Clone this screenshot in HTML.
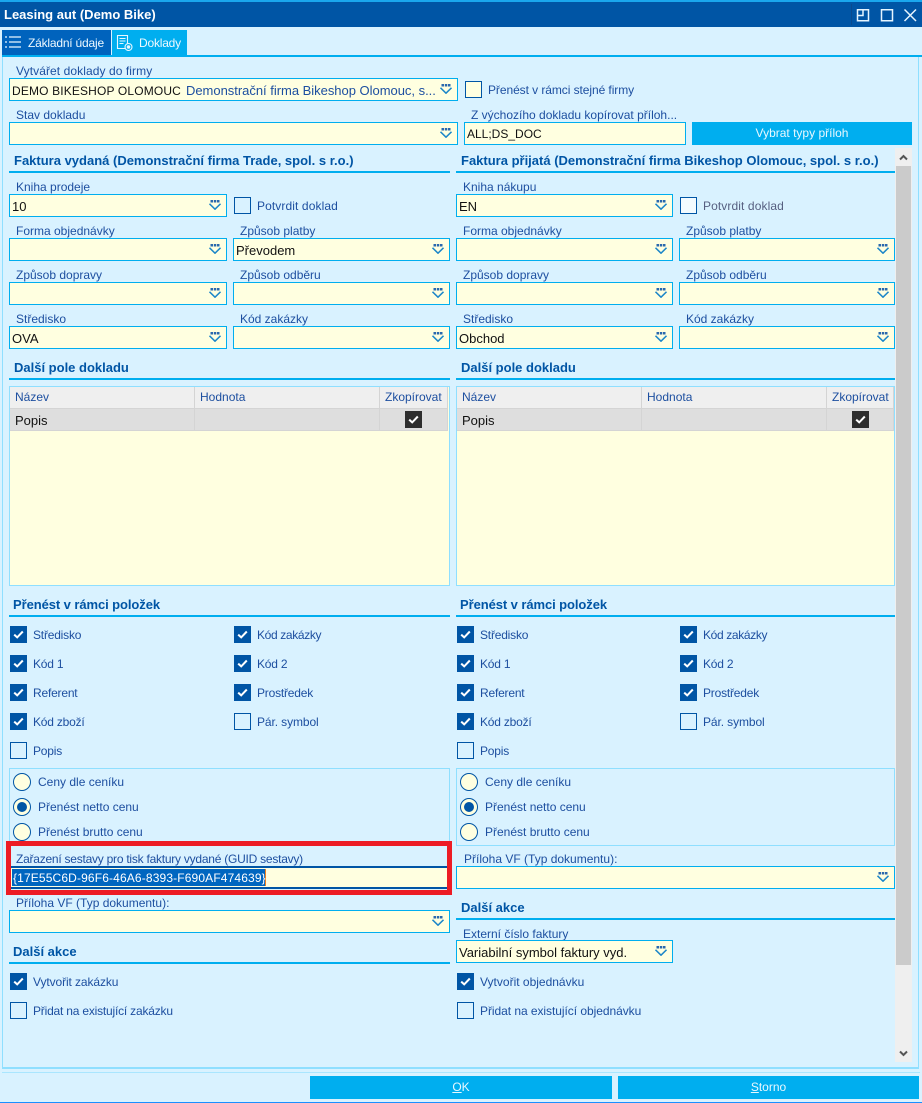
<!DOCTYPE html>
<html lang="cs"><head><meta charset="utf-8"><title>Leasing aut (Demo Bike)</title>
<style>
html,body{margin:0;padding:0}
body{width:922px;height:1103px;position:relative;overflow:hidden;background:#d9f2ff;font-family:"Liberation Sans",sans-serif;font-size:12px;color:#1d4fa0}
body div,body svg.a{position:absolute;box-sizing:border-box}
.t{white-space:nowrap;line-height:16px;height:16px}
.n{letter-spacing:-.2px}
.h{white-space:nowrap;font-weight:bold;font-size:13px;color:#0055a5;line-height:16px;height:16px}
.l{height:2px;background:#00aeef}
.i{height:23px;border:1px solid #00aeef;background:#ffffe0;color:#111;font-size:13px;line-height:23px;padding-left:2px;white-space:nowrap}
.i svg{position:absolute;right:5px;top:5px;width:12px;height:10px}
.c{width:17px;height:17px;border:1px solid #0055a5}
.c.on{background:#0055a5}
.c svg{position:absolute;left:2px;top:3px;width:11px;height:9px}
.r{width:18px;height:18px;border:1px solid #0055a5;border-radius:50%;background:#ffffe0}
.r.on:after{content:"";position:absolute;left:3px;top:3px;width:10px;height:10px;border-radius:50%;background:#0055a5}
.b{background:#00aeef;color:#e8f8ff;text-align:center;line-height:23px;height:23px}
.th{background:#efefef;height:22px;border-bottom:1px solid #d4d4d4;border-right:1px solid #d4d4d4;line-height:21px;padding-left:5px}
.td{background:#dedede;height:22px;border-bottom:1px solid #d4d4d4;border-right:1px solid #d4d4d4;line-height:23px;padding-left:5px;color:#111;font-size:13px}
.g{width:441px;height:200px;border:1px solid #8fdfff;background:#ffffe0}
</style></head><body>
<svg width="0" height="0" style="position:absolute"><defs>
<symbol id="dd" viewBox="0 0 12 10"><path d="M1.500 0h2.500v2.500H1.500zM4.800 0h2.500v2.500H4.800zM8 0h2.500v2.500H8z" fill="#2a68ad"/><path d="M.5 3.800L6 9.200l5.500-5.400" fill="none" stroke="#1c86c8" stroke-width="1.500"/></symbol>
<symbol id="ck" viewBox="0 0 11 9"><path d="M1.200 4.600L4.200 7.400 9.800 1.500" fill="none" stroke="#fff" stroke-width="2"/></symbol>
</defs></svg>

<div style="left:0;top:0;width:922px;height:2px;background:#1aa7ee"></div>
<div style="left:0;top:2px;width:922px;height:25px;background:#0055a5"></div>
<div class="t" style="left:4px;top:7px;color:#fff;font-weight:bold;font-size:13px">Leasing aut (Demo Bike)</div>
<div style="left:851px;top:4px;width:1px;height:21px;background:#0a4a8f"></div>
<svg class="a" style="left:850px;top:2px" width="72" height="25" viewBox="0 0 72 25" fill="none" stroke="#e6f5ff" stroke-width="1.500"><path d="M7.500 7.800h11v11h-11zM7.500 13.500h5.500V7.800"/><path d="M31.500 7.800h11v11h-11z"/><path d="M54.500 7.500l11.500 11.500M66 7.500L54.500 19"/></svg>

<div style="left:2px;top:30px;width:109px;height:25px;background:#0063bd"></div>
<div style="left:112px;top:30px;width:75px;height:25px;background:#00aeef"></div>
<svg class="a" style="left:4px;top:34px" width="18" height="16" viewBox="0 0 18 16" stroke="#e8f6ff" stroke-width="1.200"><path d="M1 3h2M5 3h12M1 8h2M5 8h12M1 13h2M5 13h12"/></svg>
<div class="t n" style="left:28px;top:35px;color:#eef9ff">Základní údaje</div>
<svg class="a" style="left:116px;top:34px" width="18" height="18" viewBox="0 0 18 18" fill="none" stroke="#e8f6ff" stroke-width="1.100"><path d="M1.500 1.500h10v13h-10zM3.500 4.500h6M3.500 7h6M3.500 9.500h4"/><circle cx="12.500" cy="13" r="3.500" fill="#00aeef"/><circle cx="12.500" cy="13" r="1.200" fill="#e8f6ff"/></svg>
<div class="t n" style="left:139px;top:35px;color:#eef9ff">Doklady</div>

<div style="left:2px;top:55px;width:920px;height:2px;background:#00aeef"></div>
<div style="left:2px;top:57px;width:917px;height:1012px;border:1px solid #8fdfff;border-top:0;border-width:0 1px 2px 1px"></div>
<div style="left:2px;top:1072px;width:918px;height:1px;background:#a9e6ff"></div>

<div class="t" style="left:16px;top:63px;letter-spacing:.08px">Vytvářet doklady do firmy</div>
<div class="i" style="left:9px;top:78px;width:449px"><span style="font-size:12px;letter-spacing:.15px">DEMO BIKESHOP OLOMOUC</span><span style="color:#1d4fa0;margin-left:5px;letter-spacing:-.02px">Demonstrační firma Bikeshop Olomouc, s...</span><svg><use href="#dd"/></svg></div>
<div class="c" style="left:465px;top:81px;background:#ffffe0"></div>
<div class="t" style="left:488px;top:82px;letter-spacing:-.07px">Přenést v rámci stejné firmy</div>

<div class="t" style="left:16px;top:107px">Stav dokladu</div>
<div class="i" style="left:9px;top:122px;width:449px"><svg><use href="#dd"/></svg></div>
<div class="t" style="left:471px;top:107px">Z výchozího dokladu kopírovat příloh...</div>
<div class="i" style="left:464px;top:122px;width:222px;font-size:12px">ALL;DS_DOC</div>
<div class="b" style="left:692px;top:122px;width:220px">Vybrat typy příloh</div>

<div class="h" style="left:14px;top:153px">Faktura vydaná (Demonstrační firma Trade, spol. s r.o.)</div>
<div class="l" style="left:9px;top:171px;width:441px"></div>
<div class="h" style="left:461px;top:153px">Faktura přijatá (Demonstrační firma Bikeshop Olomouc, spol. s r.o.)</div>
<div class="l" style="left:456px;top:171px;width:439px"></div>

<div style="left:895px;top:148px;width:17px;height:914px;background:#efefef"></div>
<div style="left:896px;top:166px;width:15px;height:799px;background:#cbcbcb"></div>
<svg class="a" style="left:899px;top:154px" width="9" height="7" viewBox="0 0 9 7"><path d="M1 5.500L4.500 2 8 5.500" fill="none" stroke="#555" stroke-width="2"/></svg>
<svg class="a" style="left:899px;top:1050px" width="9" height="7" viewBox="0 0 9 7"><path d="M1 1.500L4.500 5 8 1.500" fill="none" stroke="#555" stroke-width="2"/></svg>

<!-- left form -->
<div class="t" style="left:16px;top:179px">Kniha prodeje</div>
<div class="i" style="left:9px;top:194px;width:218px">10<svg><use href="#dd"/></svg></div>
<div class="c" style="left:234px;top:197px"></div>
<div class="t" style="left:257px;top:198px;letter-spacing:.1px">Potvrdit doklad</div>
<div class="t" style="left:16px;top:223px">Forma objednávky</div>
<div class="i" style="left:9px;top:238px;width:218px"><svg><use href="#dd"/></svg></div>
<div class="t" style="left:240px;top:223px">Způsob platby</div>
<div class="i" style="left:233px;top:238px;width:217px">Převodem<svg><use href="#dd"/></svg></div>
<div class="t" style="left:16px;top:267px">Způsob dopravy</div>
<div class="i" style="left:9px;top:282px;width:218px"><svg><use href="#dd"/></svg></div>
<div class="t" style="left:240px;top:267px">Způsob odběru</div>
<div class="i" style="left:233px;top:282px;width:217px"><svg><use href="#dd"/></svg></div>
<div class="t" style="left:16px;top:311px">Středisko</div>
<div class="i" style="left:9px;top:326px;width:218px">OVA<svg><use href="#dd"/></svg></div>
<div class="t" style="left:240px;top:311px">Kód zakázky</div>
<div class="i" style="left:233px;top:326px;width:217px"><svg><use href="#dd"/></svg></div>

<!-- right form -->
<div class="t" style="left:463px;top:179px">Kniha nákupu</div>
<div class="i" style="left:456px;top:194px;width:217px">EN<svg><use href="#dd"/></svg></div>
<div class="c" style="left:680px;top:197px;background:#f3fbff"></div>
<div class="t" style="left:703px;top:198px;color:#565f80;letter-spacing:.1px">Potvrdit doklad</div>
<div class="t" style="left:463px;top:223px">Forma objednávky</div>
<div class="i" style="left:456px;top:238px;width:217px"><svg><use href="#dd"/></svg></div>
<div class="t" style="left:686px;top:223px">Způsob platby</div>
<div class="i" style="left:679px;top:238px;width:216px"><svg><use href="#dd"/></svg></div>
<div class="t" style="left:463px;top:267px">Způsob dopravy</div>
<div class="i" style="left:456px;top:282px;width:217px"><svg><use href="#dd"/></svg></div>
<div class="t" style="left:686px;top:267px">Způsob odběru</div>
<div class="i" style="left:679px;top:282px;width:216px"><svg><use href="#dd"/></svg></div>
<div class="t" style="left:463px;top:311px">Středisko</div>
<div class="i" style="left:456px;top:326px;width:217px">Obchod<svg><use href="#dd"/></svg></div>
<div class="t" style="left:686px;top:311px">Kód zakázky</div>
<div class="i" style="left:679px;top:326px;width:216px"><svg><use href="#dd"/></svg></div>

<!-- tables -->
<div class="h" style="left:14px;top:360px">Další pole dokladu</div>
<div class="l" style="left:9px;top:378px;width:441px"></div>
<div class="g" style="left:9px;top:386px"></div>
<div class="th" style="left:10px;top:387px;width:185px">Název</div>
<div class="th" style="left:195px;top:387px;width:185px">Hodnota</div>
<div class="th" style="left:380px;top:387px;width:68px">Zkopírovat</div>
<div class="td" style="left:10px;top:409px;width:185px">Popis</div>
<div class="td" style="left:195px;top:409px;width:185px"></div>
<div class="td" style="left:380px;top:409px;width:68px"></div>
<div class="c" style="left:405px;top:411px;background:#2e2e2e;border-color:#2e2e2e"><svg><use href="#ck"/></svg></div>

<div class="h" style="left:461px;top:360px">Další pole dokladu</div>
<div class="l" style="left:456px;top:378px;width:439px"></div>
<div class="g" style="left:456px;top:386px;width:439px"></div>
<div class="th" style="left:457px;top:387px;width:185px">Název</div>
<div class="th" style="left:642px;top:387px;width:185px">Hodnota</div>
<div class="th" style="left:827px;top:387px;width:67px">Zkopírovat</div>
<div class="td" style="left:457px;top:409px;width:185px">Popis</div>
<div class="td" style="left:642px;top:409px;width:185px"></div>
<div class="td" style="left:827px;top:409px;width:67px"></div>
<div class="c" style="left:852px;top:411px;background:#2e2e2e;border-color:#2e2e2e"><svg><use href="#ck"/></svg></div>

<!-- checkboxes left -->
<div class="h" style="left:13px;top:597px;letter-spacing:-.08px">Přenést v rámci položek</div>
<div class="l" style="left:9px;top:615px;width:441px"></div>
<div class="c on" style="left:10px;top:626px"><svg><use href="#ck"/></svg></div><div class="t n" style="left:33px;top:627px">Středisko</div>
<div class="c on" style="left:234px;top:626px"><svg><use href="#ck"/></svg></div><div class="t n" style="left:257px;top:627px;letter-spacing:-.35px">Kód zakázky</div>
<div class="c on" style="left:10px;top:655px"><svg><use href="#ck"/></svg></div><div class="t n" style="left:33px;top:656px">Kód 1</div>
<div class="c on" style="left:234px;top:655px"><svg><use href="#ck"/></svg></div><div class="t n" style="left:257px;top:656px">Kód 2</div>
<div class="c on" style="left:10px;top:684px"><svg><use href="#ck"/></svg></div><div class="t n" style="left:33px;top:685px">Referent</div>
<div class="c on" style="left:234px;top:684px"><svg><use href="#ck"/></svg></div><div class="t n" style="left:257px;top:685px">Prostředek</div>
<div class="c on" style="left:10px;top:713px"><svg><use href="#ck"/></svg></div><div class="t n" style="left:33px;top:714px">Kód zboží</div>
<div class="c" style="left:234px;top:713px"></div><div class="t" style="left:257px;top:714px;letter-spacing:-.1px">Pár. symbol</div>
<div class="c" style="left:10px;top:742px"></div><div class="t n" style="left:33px;top:743px">Popis</div>

<!-- checkboxes right -->
<div class="h" style="left:460px;top:597px;letter-spacing:-.08px">Přenést v rámci položek</div>
<div class="l" style="left:456px;top:615px;width:439px"></div>
<div class="c on" style="left:457px;top:626px"><svg><use href="#ck"/></svg></div><div class="t n" style="left:480px;top:627px">Středisko</div>
<div class="c on" style="left:680px;top:626px"><svg><use href="#ck"/></svg></div><div class="t n" style="left:703px;top:627px;letter-spacing:-.35px">Kód zakázky</div>
<div class="c on" style="left:457px;top:655px"><svg><use href="#ck"/></svg></div><div class="t n" style="left:480px;top:656px">Kód 1</div>
<div class="c on" style="left:680px;top:655px"><svg><use href="#ck"/></svg></div><div class="t n" style="left:703px;top:656px">Kód 2</div>
<div class="c on" style="left:457px;top:684px"><svg><use href="#ck"/></svg></div><div class="t n" style="left:480px;top:685px">Referent</div>
<div class="c on" style="left:680px;top:684px"><svg><use href="#ck"/></svg></div><div class="t n" style="left:703px;top:685px">Prostředek</div>
<div class="c on" style="left:457px;top:713px"><svg><use href="#ck"/></svg></div><div class="t n" style="left:480px;top:714px">Kód zboží</div>
<div class="c" style="left:680px;top:713px"></div><div class="t" style="left:703px;top:714px;letter-spacing:-.1px">Pár. symbol</div>
<div class="c" style="left:457px;top:742px"></div><div class="t n" style="left:480px;top:743px">Popis</div>

<!-- radios -->
<div style="left:9px;top:768px;width:441px;height:78px;border:1px solid #8fdfff"></div>
<div class="r" style="left:13px;top:773px"></div><div class="t" style="left:38px;top:774px">Ceny dle ceníku</div>
<div class="r on" style="left:13px;top:798px"></div><div class="t" style="left:38px;top:799px">Přenést netto cenu</div>
<div class="r" style="left:13px;top:823px"></div><div class="t" style="left:38px;top:824px">Přenést brutto cenu</div>
<div style="left:456px;top:768px;width:439px;height:78px;border:1px solid #8fdfff"></div>
<div class="r" style="left:460px;top:773px"></div><div class="t" style="left:485px;top:774px">Ceny dle ceníku</div>
<div class="r on" style="left:460px;top:798px"></div><div class="t" style="left:485px;top:799px">Přenést netto cenu</div>
<div class="r" style="left:460px;top:823px"></div><div class="t" style="left:485px;top:824px">Přenést brutto cenu</div>

<!-- GUID -->
<div style="left:6px;top:841px;width:446px;height:54px;border:5px solid #ed1c24;background:#d9f2ff"></div>
<div class="t" style="left:16px;top:851px;letter-spacing:-.24px">Zařazení sestavy pro tisk faktury vydané (GUID sestavy)</div>
<div style="left:11px;top:866px;width:436px;height:23px;background:#ffffe0;border-top:2px solid #0055a5;border-bottom:2px solid #0055a5"></div>
<div style="left:12px;top:869px;width:254px;height:17px;background:#0066c0;border-right:1px solid #f08020;color:#fff;font-size:12px;line-height:18px;white-space:nowrap;padding-left:1px;letter-spacing:.14px">{17E55C6D-96F6-46A6-8393-F690AF474639}</div>

<div class="t" style="left:16px;top:895px">Příloha VF (Typ dokumentu):</div>
<div class="i" style="left:9px;top:910px;width:441px"><svg><use href="#dd"/></svg></div>
<div class="h" style="left:13px;top:944px">Další akce</div>
<div class="l" style="left:9px;top:962px;width:441px"></div>
<div class="c on" style="left:10px;top:973px"><svg><use href="#ck"/></svg></div><div class="t" style="left:33px;top:974px;letter-spacing:-.1px">Vytvořit zakázku</div>
<div class="c" style="left:10px;top:1002px"></div><div class="t n" style="left:33px;top:1003px">Přidat na existující zakázku</div>

<div class="t" style="left:464px;top:851px">Příloha VF (Typ dokumentu):</div>
<div class="i" style="left:456px;top:866px;width:439px"><svg><use href="#dd"/></svg></div>
<div class="h" style="left:461px;top:900px">Další akce</div>
<div class="l" style="left:456px;top:918px;width:439px"></div>
<div class="t" style="left:463px;top:926px">Externí číslo faktury</div>
<div class="i" style="left:456px;top:940px;width:217px">Variabilní symbol faktury vyd.<svg><use href="#dd"/></svg></div>
<div class="c on" style="left:457px;top:973px"><svg><use href="#ck"/></svg></div><div class="t" style="left:480px;top:974px">Vytvořit objednávku</div>
<div class="c" style="left:457px;top:1002px"></div><div class="t" style="left:480px;top:1003px;letter-spacing:-.05px">Přidat na existující objednávku</div>

<!-- buttons -->
<div class="b" style="left:310px;top:1076px;width:302px"><u>O</u>K</div>
<div class="b" style="left:618px;top:1076px;width:301px"><u>S</u>torno</div>
<div style="left:0;top:1102px;width:922px;height:1px;background:#1a8fff"></div>
</body></html>
